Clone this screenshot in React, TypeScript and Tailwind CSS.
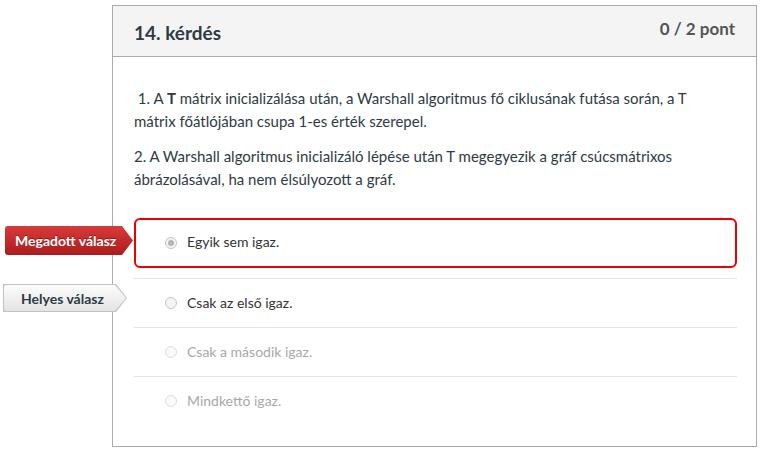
import React from 'react';

const tag = '[clip-path:polygon(0_0,calc(100%-11px)_0,100%_50%,calc(100%-11px)_100%,0_100%)]';

function Radio({ checked, faded }: { checked?: boolean; faded?: boolean }) {
  return (
    <span
      className={`flex h-[12px] w-[12px] items-center justify-center rounded-full border ${
        faded ? 'border-[#dcdcdc] bg-[#fafafa]' : 'border-[#c4c4c4] bg-[#f4f4f4]'
      }`}
    >
      {checked && <span className="h-[6px] w-[6px] rounded-full bg-[#b5b5b5]" />}
    </span>
  );
}

export default function App() {
  const answers = [
    { text: 'Csak az első igaz.', faded: false },
    { text: 'Csak a második igaz.', faded: true },
    { text: 'Mindkettő igaz.', faded: true },
  ];

  return (
    <div className="relative h-[449px] w-[762px] bg-white pl-[112px] pt-[5px] font-['Lato',sans-serif]">
      <div className="w-[645px] border border-[#ababab]">
        <div className="flex h-[51px] items-start justify-between border-b border-[#ababab] bg-[#f4f4f4] px-[21px]">
          <h2 className="pt-[13px] text-[19px] font-bold text-[#2d3b45]">14. kérdés</h2>
          <span className="pt-[10px] text-[17px] font-bold text-[#555]">0 / 2 pont</span>
        </div>

        <div className="pb-[21px] pl-[21px] pr-[19px] pt-[30px]">
          <div className="mr-[12px] text-[15px] leading-[23px] text-[#2d3b45]">
            <p>
              &nbsp;1. A <strong>T</strong> mátrix inicializálása után, a Warshall algoritmus fő ciklusának futása során, a T
              mátrix főátlójában csupa 1-es érték szerepel.
            </p>
            <p className="mt-[12px]">
              2. A Warshall algoritmus inicializáló lépése után T megegyezik a gráf csúcsmátrixos ábrázolásával, ha nem
              élsúlyozott a gráf.
            </p>
          </div>

          <div className="mt-[27px]">
            <div className="relative flex h-[50px] items-center rounded-[6px] border-2 border-[#ee0000] pl-[29px]">
              <Radio checked />
              <span className="ml-[10px] pb-[3px] text-[14px] text-[#333]">Egyik sem igaz.</span>
            </div>
            <div className="mt-[10px]">
              {answers.map((a) => (
                <div key={a.text} className="flex h-[49px] items-center border-t border-[#e4e4e4] pl-[31px]">
                  <Radio faded={a.faded} />
                  <span className={`ml-[10px] pb-[2px] text-[14px] ${a.faded ? 'text-[#a8a8a8]' : 'text-[#333]'}`}>
                    {a.text}
                  </span>
                </div>
              ))}
            </div>
          </div>
        </div>
      </div>

      <div
        className={`absolute left-[5px] top-[226px] flex h-[29px] w-[128px] items-center rounded-l-[3px] bg-gradient-to-b from-[#d93a3a] to-[#ad1c1c] pl-[10px] text-[14px] font-bold text-white [text-shadow:0_-1px_0_rgba(0,0,0,0.35)] ${tag}`}
      >
        Megadott válasz
      </div>

      <div className={`absolute left-[3px] top-[284px] h-[28px] w-[124px] bg-[#c2c2c2] p-px ${tag}`}>
        <div
          className={`flex h-full w-full items-center rounded-l-[2px] bg-gradient-to-b from-[#fdfdfd] to-[#e3e3e3] pl-[17px] text-[14px] font-bold text-[#2d3b45] ${tag}`}
        >
          Helyes válasz
        </div>
      </div>
    </div>
  );
}
